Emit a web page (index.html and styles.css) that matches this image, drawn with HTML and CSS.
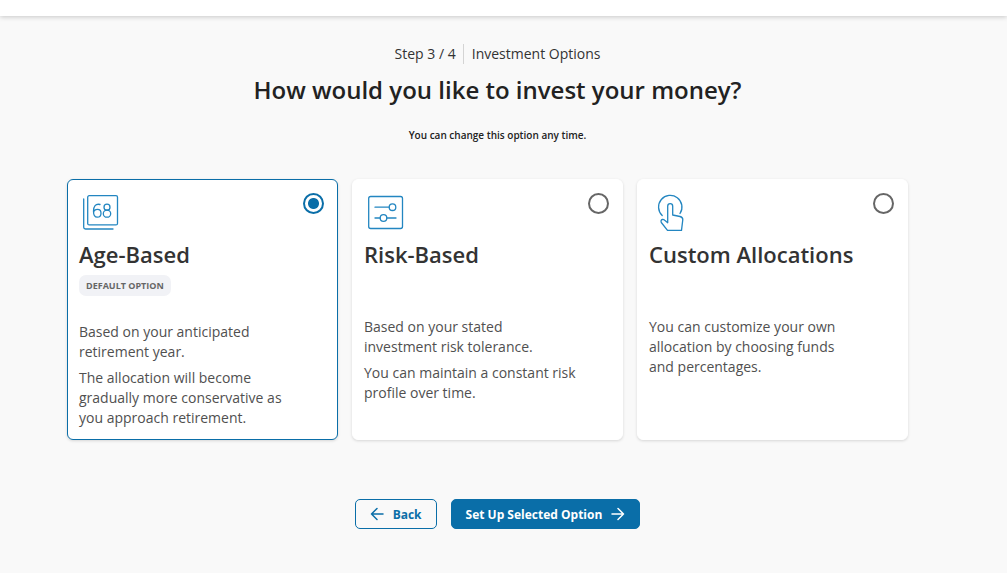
FILE: index.html
```html
<!DOCTYPE html>
<html lang="en">
<head>
    <meta charset="UTF-8">
    <meta name="viewport" content="width=device-width, initial-scale=1.0">
    <title>Investment Options</title>
    <link rel="stylesheet" href="styles.css">
</head>
<body>
    <header class="top-bar"></header>

    <main class="page">
        <div class="steps">
            <span class="step-count">Step 3 / 4</span>
            <span class="step-name">Investment Options</span>
        </div>
        <h1>How would you like to invest your money?</h1>
        <p class="hint">You can change this option any time.</p>

        <form>
            <div class="options">
                <label class="option" for="ageBased">
                    <span class="option-top">
                        <svg class="icon" width="44" height="40" viewBox="0 0 44 40">
                            <rect x="8.7" y="4.7" width="29.8" height="29.2" rx="1.5"/>
                            <path d="M4.7 8v28.2q0 1.800 1.800 1.800H34"/>
                            <path d="M21 13.500c-4.500-1.200-6.500 2-6.500 6.700 0 4 1.200 6 3.800 6 2.400 0 3.700-1.600 3.700-4s-1.300-3.800-3.500-3.800-3.700 1.300-3.900 3.300"/>
                            <ellipse cx="28" cy="16.200" rx="3" ry="3"/>
                            <ellipse cx="28" cy="22.700" rx="3.700" ry="3.500"/>
                        </svg>
                        <input type="radio" id="ageBased" name="option" value="age" checked>
                    </span>
                    <span class="option-title">Age-Based</span>
                    <span class="option-tag"><span class="badge">DEFAULT OPTION</span></span>
                    <span class="option-text">Based on your anticipated retirement year.</span>
                    <span class="option-text">The allocation will become gradually more conservative as you approach retirement.</span>
                </label>

                <label class="option" for="riskBased">
                    <span class="option-top">
                        <svg class="icon" width="44" height="40" viewBox="0 0 44 40">
                            <rect x="4.7" y="5.5" width="33.8" height="32" rx="2"/>
                            <path d="M11 16.200h14.200M11 27h5.200M22.800 27H32"/>
                            <circle cx="28.5" cy="16.200" r="3.3"/>
                            <circle cx="19.5" cy="27" r="3.3"/>
                        </svg>
                        <input type="radio" id="riskBased" name="option" value="risk">
                    </span>
                    <span class="option-title">Risk-Based</span>
                    <span class="option-tag"></span>
                    <span class="option-text">Based on your stated investment risk tolerance.</span>
                    <span class="option-text">You can maintain a constant risk profile over time.</span>
                </label>

                <label class="option" for="custom">
                    <span class="option-top">
                        <svg class="icon" width="44" height="40" viewBox="0 0 44 40">
                            <path d="M13.200 24.500A11.700 11.700 0 1 1 31 22.500"/>
                            <path d="M18.700 29V15.200a2.500 2.500 0 0 1 5 0v8.800l7.300 1.500q2.900.7 2.800 3.200L32.500 39.300H18.500L12.300 31.500q-.9-2.500 1.100-3 1.200-.2 2.300.8l3 2.400Z"/>
                        </svg>
                        <input type="radio" id="custom" name="option" value="custom">
                    </span>
                    <span class="option-title">Custom Allocations</span>
                    <span class="option-tag"></span>
                    <span class="option-text">You can customize your own allocation by choosing funds and percentages.</span>
                </label>
            </div>

            <div class="actions">
                <button type="button" class="btn btn-back">
                    <svg width="14" height="14" viewBox="0 0 14 14"><path d="M13 7H1.500M7 1.500 1.500 7 7 12.500"/></svg>
                    Back
                </button>
                <button type="submit" class="btn btn-next">
                    Set Up Selected Option
                    <svg width="14" height="14" viewBox="0 0 14 14"><path d="M1 7h11.500M7 1.500 12.500 7 7 12.500"/></svg>
                </button>
            </div>
        </form>
    </main>
</body>
</html>
```

FILE: styles.css
```css
* {
    box-sizing: border-box;
}

body {
    margin: 0;
    background-color: #f9f9f9;
    color: #333;
    font-family: "Open Sans", "Noto Sans", sans-serif;
    font-size: 14px;
    line-height: 20px;
}

.top-bar {
    height: 16px;
    background: #fff;
    box-shadow: 0 1px 5px rgba(0, 0, 0, 0.2);
}

.page {
    max-width: 995px;
    padding: 28px 67px 44px;
}

.steps {
    display: flex;
    justify-content: center;
}

.step-count {
    padding-right: 7px;
    border-right: 1px solid #d4d4d4;
}

.step-name {
    padding-left: 8px;
}

h1 {
    margin: 10px 0 0;
    font-size: 24px;
    font-weight: 600;
    line-height: 32px;
    text-align: center;
    color: #222;
}

.hint {
    margin: 19px 0 0;
    font-size: 10px;
    font-weight: 600;
    text-align: center;
    color: #222;
}

.options {
    display: grid;
    grid-template-columns: repeat(3, 1fr);
    gap: 14px;
    margin-top: 34px;
    padding-right: 20px;
}

.option {
    display: block;
    min-height: 261px;
    padding: 11px;
    background: #fff;
    border: 1px solid #fff;
    border-radius: 6px;
    box-shadow: 0 1px 3px rgba(0, 0, 0, 0.14);
    cursor: pointer;
}

.option:has(input:checked) {
    border-color: #0a6ea8;
}

.option-top {
    display: flex;
    justify-content: space-between;
    align-items: flex-start;
    height: 49px;
}

.icon {
    fill: none;
    stroke: #2386c1;
    stroke-width: 1.3;
    stroke-linecap: round;
    stroke-linejoin: round;
}

.option input {
    appearance: none;
    width: 21px;
    height: 21px;
    margin: 2px;
    border: 2px solid #666;
    border-radius: 50%;
}

.option input:checked {
    border-color: #0a6ea8;
    background: radial-gradient(circle, #0a6ea8 5px, #fff 6px);
}

.option-title {
    display: block;
    font-size: 22px;
    font-weight: 600;
    line-height: 28px;
}

.option-tag {
    display: block;
    min-height: 16px;
    margin: 7px 0 26px;
}

.badge {
    display: block;
    width: fit-content;
    padding: 0 7px;
    border-radius: 7px;
    background: #f1f2f6;
    color: #666;
    font-size: 9px;
    font-weight: 700;
    line-height: 21px;
}

.option-text {
    display: block;
    max-width: 213px;
    margin-bottom: 6px;
    color: #505050;
}

.option-text:last-child {
    margin-bottom: 0;
}

.actions {
    display: flex;
    justify-content: center;
    gap: 14px;
    margin-top: 59px;
}

.btn {
    display: flex;
    align-items: center;
    gap: 9px;
    height: 30px;
    padding: 0 14px;
    border: 1px solid #0a6ea8;
    border-radius: 5px;
    font-family: inherit;
    font-size: 12px;
    font-weight: 700;
    cursor: pointer;
}

.btn svg {
    fill: none;
    stroke: currentColor;
    stroke-width: 1.5;
    stroke-linecap: round;
    stroke-linejoin: round;
}

.btn-back {
    background: transparent;
    color: #0a6ea8;
}

.btn-next {
    background: #0a6ea8;
    color: #fff;
}
```
